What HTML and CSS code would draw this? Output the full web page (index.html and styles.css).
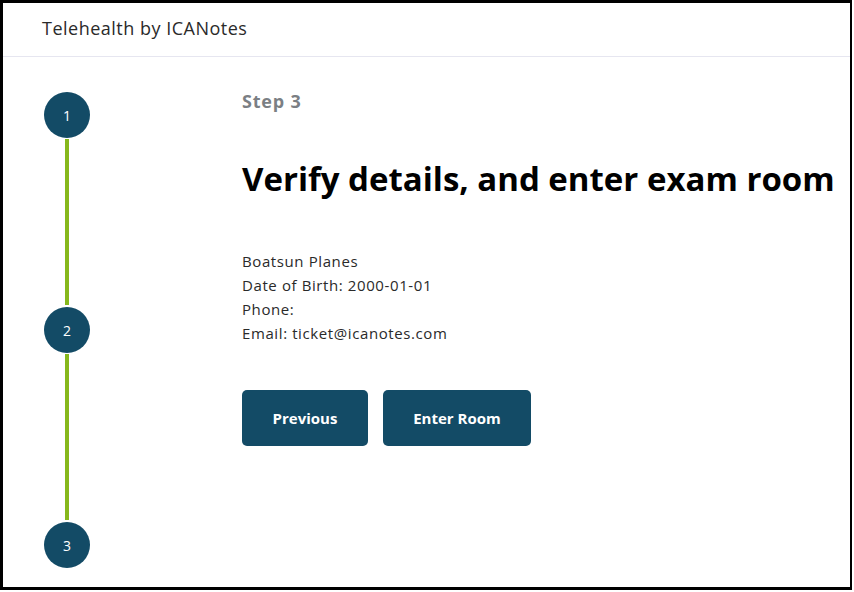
FILE: index.html
```html
<!DOCTYPE html>
<html>
  <head>
    <meta charset="utf-8">
    <title>Telehealth by ICANotes</title>
    <link rel="stylesheet" href="styles.css">
  </head>
  <body>
    <div class="frame">
      <div class="topbar">Telehealth by ICANotes</div>

      <div class="main">
        <div class="stepper">
          <div class="dot">1</div>
          <div class="bar"></div>
          <div class="dot">2</div>
          <div class="bar"></div>
          <div class="dot">3</div>
        </div>

        <div class="content">
          <div class="step-label">Step 3</div>
          <h1 class="title">Verify details, and enter exam room</h1>

          <div class="details">
            Boatsun Planes<br>
            Date of Birth: 2000-01-01<br>
            Phone:<br>
            Email: ticket@icanotes.com
          </div>

          <div class="actions">
            <button class="btn btn-prev">Previous</button>
            <button class="btn btn-enter">Enter Room</button>
          </div>
        </div>
      </div>
    </div>
  </body>
</html>
```

FILE: styles.css
```css
body, html {
    margin: 0;
    padding: 0;
    background: #fff;
    overflow: hidden;
}
body {
    font-family: "Open Sans", "Liberation Sans", sans-serif;
    color: #222;
}
.frame {
    box-sizing: border-box;
    width: 852px;
    height: 590px;
    border: 3px solid #000;
    border-right-width: 2px;
    overflow: hidden;
}
.topbar {
    height: 50px;
    padding-bottom: 3px;
    border-bottom: 1px solid #e6e6f0;
    display: flex;
    align-items: center;
    padding-left: 39px;
    font-size: 18px;
    letter-spacing: 0.5px;
    color: #2a2a2a;
}
.main {
    display: flex;
    flex-direction: row;
}
.stepper {
    display: flex;
    flex-direction: column;
    align-items: center;
    width: 46px;
    margin-left: 41px;
    padding-top: 35px;
}
.dot {
    width: 46px;
    height: 46px;
    border-radius: 50%;
    background: #134b66;
    color: #fff;
    font-size: 14px;
    display: flex;
    align-items: center;
    justify-content: center;
}
.bar {
    width: 4px;
    height: 166px;
    margin: 1px 0 2px;
    background: #86b81c;
}
.content {
    margin-left: 152px;
    padding-top: 32px;
}
.step-label {
    font-size: 18px;
    font-weight: bold;
    letter-spacing: 0.8px;
    color: #7b7f84;
}
.title {
    margin: 43px 0 0;
    font-size: 33px;
    font-weight: bold;
    color: #000;
    white-space: nowrap;
}
.details {
    margin-top: 48px;
    font-size: 15px;
    line-height: 24px;
    letter-spacing: 0.6px;
    color: #2a2a2a;
}
.actions {
    display: flex;
    gap: 15px;
    margin-top: 45px;
}
.btn {
    height: 56px;
    border: none;
    border-radius: 5px;
    background: #134b66;
    color: #fff;
    font-family: inherit;
    font-size: 15px;
    font-weight: bold;
}
.btn-prev {
    width: 126px;
}
.btn-enter {
    width: 148px;
}
```
